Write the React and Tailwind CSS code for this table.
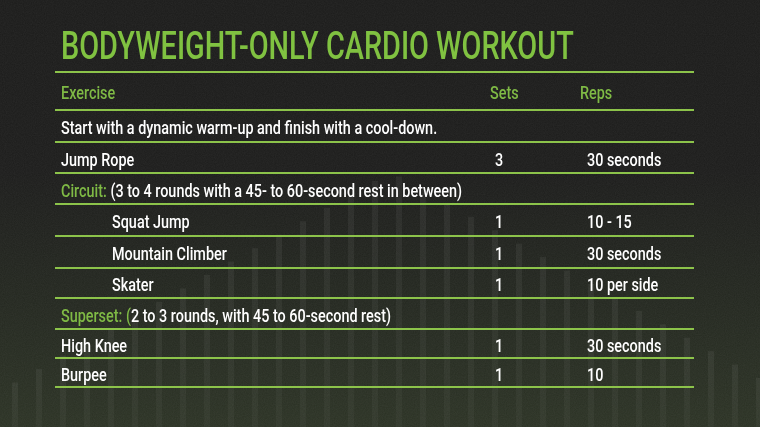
import React from 'react';

const FONT = { fontFamily: "Roboto, 'Liberation Sans', Arial, sans-serif" };

const rows = [
  { kind: 'note', text: 'Start with a dynamic warm-up and finish with a cool-down.', h: 'h-[32px]' },
  { kind: 'item', name: 'Jump Rope', sets: '3', reps: '30 seconds', h: 'h-[31px]' },
  { kind: 'group', label: 'Circuit:', rest: ' (3 to 4 rounds with a 45- to 60-second rest in between)', h: 'h-[31px]' },
  { kind: 'item', name: 'Squat Jump', sets: '1', reps: '10 - 15', indent: true, h: 'h-[32px]' },
  { kind: 'item', name: 'Mountain Climber', sets: '1', reps: '30 seconds', indent: true, h: 'h-[32px]' },
  { kind: 'item', name: 'Skater', sets: '1', reps: '10 per side', indent: true, h: 'h-[30px]' },
  { kind: 'group', label: 'Superset: (', rest: '2 to 3 rounds, with 45 to 60-second rest)', h: 'h-[31px]' },
  { kind: 'item', name: 'High Knee', sets: '1', reps: '30 seconds', h: 'h-[29px]' },
  { kind: 'item', name: 'Burpee', sets: '1', reps: '10', h: 'h-[29px]' },
];

// condensed look: the installed fonts are wide, so squeeze them horizontally
function T({ children }) {
  return <span className="inline-block whitespace-nowrap origin-left scale-x-[0.8]">{children}</span>;
}

// faint equalizer bars behind the table
function Bars() {
  const bars = [];
  for (let x = 12; x < 760; x += 24) {
    const top = 172 + Math.abs(x - 388) * 0.56;
    bars.push(<rect key={x} x={x} y={top} width="6" height={427 - top} fill="url(#barFade)" />);
  }
  return (
    <svg className="absolute inset-0" width="760" height="427" viewBox="0 0 760 427">
      <defs>
        <linearGradient id="barFade" x1="0" y1="0" x2="0" y2="1">
          <stop offset="0" stopColor="#ffffff" stopOpacity="0.055" />
          <stop offset="1" stopColor="#ffffff" stopOpacity="0.03" />
        </linearGradient>
        <filter id="grain">
          <feTurbulence type="fractalNoise" baseFrequency="0.9" numOctaves="2" stitchTiles="stitch" />
          <feColorMatrix type="matrix" values="0 0 0 0 1  0 0 0 0 1  0 0 0 0 1  0 0 0 0.06 0" />
        </filter>
      </defs>
      {bars}
      <rect width="760" height="427" filter="url(#grain)" />
    </svg>
  );
}

export default function App() {
  return (
    <div
      className="relative w-[760px] h-[427px] overflow-hidden bg-[linear-gradient(180deg,#1b1b1a_0%,#1c1c1b_40%,#23271f_70%,#2b3224_100%)]"
      style={FONT}
    >
      <Bars />
      <div className="relative pt-[27px] pl-[61px]">
        <h1 className="text-[39px] leading-[39px] font-medium text-[#80c241] mb-[5px]">
          <span className="inline-block whitespace-nowrap origin-left scale-x-[0.74]">BODYWEIGHT-ONLY CARDIO WORKOUT</span>
        </h1>
      </div>

      <div className="relative ml-[55px] w-[639px] border-t-2 border-[#8cc34a] text-[18px] leading-none font-medium">
        {/* header */}
        <div className="grid grid-cols-[435px_90px_1fr] h-[38px] items-center pt-1 border-b-2 border-[#8cc34a] text-[#7fba45]">
          <div className="pl-[6px]"><T>Exercise</T></div>
          <div><T>Sets</T></div>
          <div><T>Reps</T></div>
        </div>

        {rows.map((r, i) => (
          <div key={i} className={`grid grid-cols-[435px_90px_1fr] ${r.h} items-center pt-1 border-b-2 border-[#8cc34a] text-white`}>
            {r.kind === 'note' && <div className="pl-[6px] col-span-3"><T>{r.text}</T></div>}
            {r.kind === 'group' && (
              <div className="pl-[6px] col-span-3">
                <T>
                  <span className="text-[#7fba45]">{r.label}</span>
                  {r.rest}
                </T>
              </div>
            )}
            {r.kind === 'item' && (
              <>
                <div className={r.indent ? 'pl-[57px]' : 'pl-[6px]'}><T>{r.name}</T></div>
                <div className="pl-[5px]"><T>{r.sets}</T></div>
                <div className="pl-[7px]"><T>{r.reps}</T></div>
              </>
            )}
          </div>
        ))}
      </div>
    </div>
  );
}
